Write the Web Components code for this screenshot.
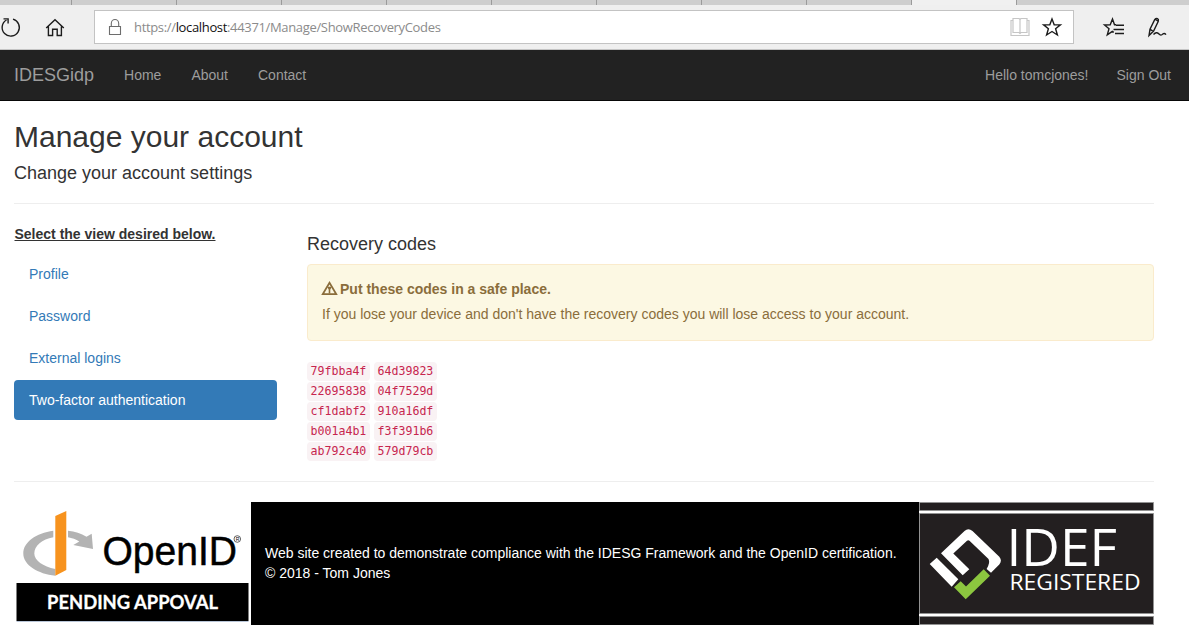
<!DOCTYPE html>
<html lang="en">
<head>
<meta charset="utf-8">
<title>Recovery codes - IDESGidp</title>
<style>
body{margin:0;background:#fff;color:#333;font:14px/20px "Liberation Sans",Arial,sans-serif}
</style>
</head>
<body>
<id-app></id-app>
<script>
const define=(name,html)=>{
  const t=document.createElement('template');t.innerHTML=html;
  customElements.define(name,class extends HTMLElement{
    constructor(){super();this.attachShadow({mode:'open'}).append(t.content.cloneNode(true));}
  });
};

define('browser-tabs',`<style>
:host{display:flex;height:5px;background:#cecece;overflow:hidden}
i{box-sizing:border-box;width:105px;border-right:1px solid #9b9b9b;flex:none}
i:first-of-type{width:72px}
i.on{background:#f0f0f0}
</style><i></i><i></i><i></i><i></i><i></i><i></i><i></i><i></i><i></i><i class="on"></i>`);

define('browser-toolbar',`<style>
:host{display:flex;box-sizing:border-box;height:45px;background:#efefef;border-bottom:1px solid #c4c4c4;padding-top:5px}
svg{display:block;flex:none;fill:none;stroke:#1c1c1c;stroke-width:1.4}
.address{box-sizing:border-box;width:980px;height:34px;border:1px solid #c3c3c3;background:#fff;display:flex;flex:none}
.url{font:13px/32px "Open Sans","Noto Sans",sans-serif;color:#8b8b8b;white-space:nowrap;flex:1;letter-spacing:-.34px}
.url b{font-weight:400;color:#111}
</style>
<svg width="94" height="34">
 <path d="M13 9.200A8.600 8.600 0 1 1 6.500 10"/><path d="M3.500 8.900h4.600v4.600"/>
 <path d="M46.200 18 55 9.700l8.800 8.300M48.400 16.500V25.500h4.200v-6.200h4.600V25.500h4.200v-9"/>
</svg>
<div class="address">
 <svg width="39" height="32" style="stroke:#6d6d6d;stroke-width:1.1"><path d="M14.500 15.500h11v8h-11zM16.300 15.500v-3a3.700 4 0 0 1 7.400 0v3"/></svg>
 <div class="url">https://<b>localhost</b>:44371/Manage/ShowRecoveryCodes</div>
 <svg width="64" height="32">
  <path style="stroke:#c6c6c6;stroke-width:1.200" d="M3.500 9.500H2v15h18v-15h-1.500M4 7.500h6l1 1 1-1H18v14h-6l-1 1-1-1H4zM11 8.500v14"/>
  <path d="M43 8 45.200 13.800l6.200.1-4.800 3.900 1.800 6.200-5.400-3.500-5.400 3.500 1.800-6.200-4.800-3.900 6.200-.1z"/>
 </svg>
</div>
<svg width="115" height="34">
 <path d="M42 14.800h-1.500L38.500 9l-2.300 5.800-5.700.2 4.500 3.800-1.700 6.100 5-3.500 1.500 1M42 15.300H50M39.500 19.500H50M41 23.500H50"/>
 <path d="M75 25.500 76 19.300l4.800-9.800q1.300-1.500 2.700-.8t.8 2.500l-4.700 9.900zM76.200 19.300l3 2M81.500 9.500l2.300 1.500M79.500 24.500q3-3.200 5.200-.7t4.300.1q1.500-1 3 .7"/>
</svg>`);

define('nav-item',`<style>:host{display:block;padding:15px;line-height:20px;color:#9d9d9d;white-space:nowrap}</style><slot></slot>`);

define('site-navbar',`<style>
:host{display:flex;box-sizing:border-box;height:51px;background:#222;border-bottom:1px solid #080808;padding:0 3px 0 14px}
.brand{font-size:18px;padding:15px 15px 15px 0;color:#9d9d9d}
.right{display:flex;margin-left:auto}
.right nav-item{padding:15px 15px 15px 13px}
</style><div class="brand">IDESGidp</div><nav-item>Home</nav-item><nav-item>About</nav-item><nav-item>Contact</nav-item>
<div class="right"><nav-item>Hello tomcjones!</nav-item><nav-item>Sign Out</nav-item></div>`);

define('side-link',`<style>
:host{display:block;padding:10px 15px;border-radius:4px;color:#337ab7;line-height:20px;margin-bottom:2px}
:host([active]){background:#337ab7;color:#fff}
</style><slot></slot>`);

define('alert-box',`<style>
:host{display:block;box-sizing:border-box;height:77px;padding:15px 14px;border:1px solid #faebcc;border-radius:4px;background:#fcf8e3;color:#8a6d3b}
p{margin:0;line-height:20px}
.t{display:flex;font-weight:700;margin-top:-1px;margin-bottom:5px}
svg{width:17px;height:15px;margin:2px 2px 0 -1px}
</style><p class="t"><svg viewBox="0 0 17 15"><path d="M8.500 1.700 1.700 13.200h13.600z" fill="none" stroke="#8a6d3b" stroke-width="1.700"/><path d="M6.200 5.800h4.600L9.400 8.500H7.600zM7.700 8h1.600v4.500H7.700z" fill="#8a6d3b"/></svg><slot name="title"></slot></p><p><slot></slot></p>`);

define('recovery-code',`<style>
:host{display:block;box-sizing:border-box;width:63px;height:18.500px;border-radius:4px;background:#f9f2f4;color:#c7254e;font:11.600px/18px "DejaVu Sans Mono",monospace;padding-left:3.500px}
</style><slot></slot>`);

define('openid-badge',`<style>:host{display:block;width:237px;height:123px}svg{display:block}</style>
<svg width="237" height="123">
<path fill="#b3b3b3" d="M39.300 28.700C22 31 9.300 40 9.300 51.500 9.300 63 24 72 41.300 73.700V67C29 64.500 20.300 58.500 20.300 51.500 20.300 44 28 37 39.300 35.300zM54 28.700C61 29.500 67 31.500 72.500 34.700L77.700 31.700 79 47 59.300 43 65.300 39.500C62 37.500 58 36 54 35.300z"/>
<path fill="#f7931e" d="M41.300 14 52.300 9V68L41.300 73.700z"/>
<text x="88.500" y="62.500" font-family="Liberation Sans,sans-serif" font-size="40.500" stroke="#000" stroke-width=".5" textLength="134.500" lengthAdjust="spacingAndGlyphs">OpenID</text>
<circle cx="223.300" cy="37" r="3.300" fill="none" stroke="#222" stroke-width=".7"/><text x="221.700" y="38.800" font-family="Liberation Sans,sans-serif" font-size="5">R</text>
<path fill="#000" d="M2.500 81h232v38H2.500z"/><path fill="#b9c6d8" d="M2.500 119h232v1H2.500z"/>
<text x="33" y="106.500" fill="#fff" font-family="Lato,sans-serif" font-weight="700" font-size="18.500" stroke="#fff" stroke-width=".3" textLength="171" lengthAdjust="spacingAndGlyphs">PENDING APPOVAL</text>
</svg>`);

define('idef-badge',`<style>:host{display:block;width:235px;height:123px}svg{display:block}</style>
<svg width="235" height="123">
<path fill="#fff" d="M0 0h235v123H0z"/>
<g fill="#231f20" stroke="#929292"><path d="M.5.500h234v8H.500zM.500 11.500h234v100H.500zM.500 114.500h234v8H.500z"/></g>
<g fill="#fff"><path d="M10.700 62 17.700 55.700 39.300 77.300 32.700 84.700zM22 51.300 45.500 28.900Q49.300 25.800 53.500 28.900L80.300 54.700Q83.500 58.500 80.300 62.500L72 70.700 67.600 67Q71.500 60.500 69.500 57L50.500 38.700Q49.300 37.700 48 38.700L34.300 51.500 50.300 67.300 43.700 73.300z"/></g>
<path fill="#8cc63f" d="M35 85.300 41.700 79.300 47 84.500 64.700 67.200 71 73.700 46.700 97.300z"/>
<g fill="#fff" font-family="Open Sans,Noto Sans,sans-serif"><text x="87.500" y="64" font-size="51.500" textLength="110.500" lengthAdjust="spacingAndGlyphs">IDEF</text>
<text x="90.500" y="88" font-size="22" textLength="131" lengthAdjust="spacingAndGlyphs">REGISTERED</text></g>
</svg>`);

define('site-footer',`<style>
:host{display:flex;height:123px}
.mid{box-sizing:border-box;width:668px;background:#000;color:#fff;padding:41px 14px}
</style><openid-badge></openid-badge><div class="mid">Web site created to demonstrate compliance with the IDESG Framework and the OpenID certification.<br>© 2018 - Tom Jones</div><idef-badge></idef-badge>`);

define('id-app',`<style>
:host{display:block;height:631px;overflow:hidden}
main{width:1140px;margin-left:14px;padding-top:19px}
h2,h4{font-weight:400;margin:0}
h2{font-size:30px;line-height:33px;margin-bottom:10px}
h4{font-size:18px;line-height:20px}
hr{border:0;height:1px;background:#eee;margin:20px 0}
.cols{display:grid;grid-template-columns:262.500px 847px;column-gap:30.500px;height:237px}
.lead{font-weight:700;margin:0 0 10px}
.lead span{text-decoration:underline;padding-left:.500px}
.right{padding-top:10px}
.right h4{margin-bottom:10px}
.codes{display:grid;grid-template-columns:63px 63px;gap:1.500px 4px;margin-top:21px}
</style>
<browser-tabs></browser-tabs><browser-toolbar></browser-toolbar><site-navbar></site-navbar>
<main>
<h2>Manage your account</h2><h4>Change your account settings</h4><hr>
<div class="cols">
<div><p class="lead"><span>Select the view desired below.</span></p>
<side-link>Profile</side-link><side-link>Password</side-link><side-link>External logins</side-link><side-link active>Two-factor authentication</side-link></div>
<div class="right"><h4>Recovery codes</h4>
<alert-box><span slot="title">Put these codes in a safe place.</span>If you lose your device and don't have the recovery codes you will lose access to your account.</alert-box>
<div class="codes"><recovery-code>79fbba4f</recovery-code><recovery-code>64d39823</recovery-code><recovery-code>22695838</recovery-code><recovery-code>04f7529d</recovery-code><recovery-code>cf1dabf2</recovery-code><recovery-code>910a16df</recovery-code><recovery-code>b001a4b1</recovery-code><recovery-code>f3f391b6</recovery-code><recovery-code>ab792c40</recovery-code><recovery-code>579d79cb</recovery-code></div></div>
</div>
<hr>
<site-footer></site-footer>
</main>`);
</script>
</body>
</html>
